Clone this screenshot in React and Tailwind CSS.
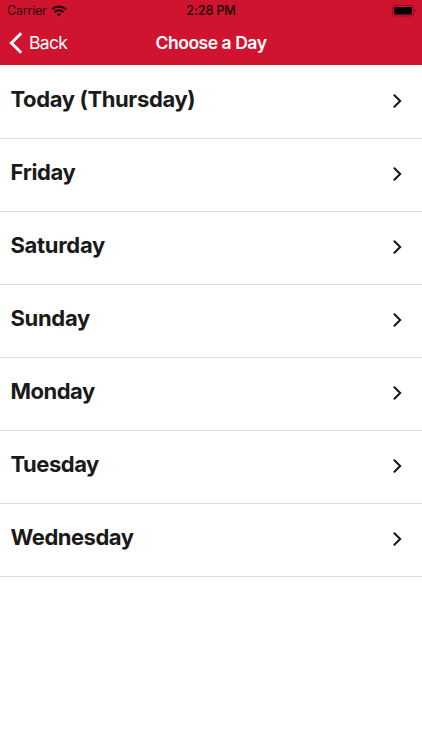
const days = [
  { label: 'Today (Thursday)', tracking: 'tracking-[-0.37px]' },
  { label: 'Friday', tracking: 'tracking-[-0.35px]' },
  { label: 'Saturday', tracking: 'tracking-[-0.3px]' },
  { label: 'Sunday', tracking: 'tracking-[-0.32px]' },
  { label: 'Monday', tracking: 'tracking-[-0.5px]' },
  { label: 'Tuesday', tracking: 'tracking-[-0.48px]' },
  { label: 'Wednesday', tracking: 'tracking-[-0.48px]' },
];

function WifiIcon() {
  return (
    <svg width="16" height="12" viewBox="0 0 16 12" fill="none" stroke="#29060b" strokeWidth="2.3">
      <path d="M1.1 4.3C5 .7 11 .7 14.9 4.3" />
      <path d="M3.7 7.1C6.1 4.9 9.9 4.9 12.3 7.1" />
      <path d="M8 11.5 5.6 9.1C7 7.9 9 7.9 10.4 9.1Z" fill="#29060b" stroke="none" />
    </svg>
  );
}

function BatteryIcon() {
  return (
    <svg width="25" height="12" viewBox="0 0 25 12" fill="none">
      <rect x=".5" y=".5" width="21" height="10.5" rx="2.7" stroke="#8d0d20" />
      <rect x="2" y="2" width="18" height="7.5" rx="1.4" fill="#000" />
      <path d="M23 4v3.5c1.4-.6 1.4-2.9 0-3.5Z" fill="#8d0d20" />
    </svg>
  );
}

function StatusBar() {
  return (
    <div className="grid h-[22px] grid-cols-3 items-center text-[#29060b]">
      <div className="flex items-center gap-1 pl-[7px]">
        <span className="w-[40px] text-[12.5px] leading-[22px] tracking-[-0.2px]">Carrier</span>
        <WifiIcon />
      </div>
      <span className="text-center text-[12.5px] leading-[22px] font-semibold tracking-[-0.1px]">2:28 PM</span>
      <div className="flex justify-end pr-[5px]">
        <BatteryIcon />
      </div>
    </div>
  );
}

export default function App() {
  return (
    <div className="min-h-[750px] w-full bg-white font-['Inter','Liberation_Sans',sans-serif]">
      <header className="h-[65px] bg-[#d0142f]">
        <StatusBar />
        <div className="grid h-[41px] grid-cols-[1fr_auto_1fr] items-center text-white">
          <button className="flex items-center gap-[6px] pl-[9px]">
            <svg width="14" height="22" viewBox="0 0 14 22" fill="none" stroke="white" strokeWidth="3">
              <path d="M12.2 1.3 2.4 11l9.8 9.7" />
            </svg>
            <span className="text-[17.5px] leading-[41px] tracking-[-0.65px]">Back</span>
          </button>
          <h1 className="text-[17.5px] leading-[41px] font-semibold tracking-[-0.45px]">Choose a Day</h1>
          <span />
        </div>
      </header>
      <ul>
        {days.map((day) => (
          <li
            key={day.label}
            className="flex h-[73px] items-center justify-between border-b border-[#dcdcdc] pr-[19px] pb-[2px] pl-[10.5px] text-[#1a1a1a] first:h-[74px] first:pb-[1px]"
          >
            <span className={`pb-[4px] text-[22px] leading-[28px] font-bold ${day.tracking}`}>{day.label}</span>
            <svg width="11" height="16" viewBox="0 0 11 16" fill="none" stroke="#151515" strokeWidth="2" strokeLinecap="round">
              <path d="m2.4 2.2 5.8 5.8-5.8 5.8" />
            </svg>
          </li>
        ))}
      </ul>
    </div>
  );
}
